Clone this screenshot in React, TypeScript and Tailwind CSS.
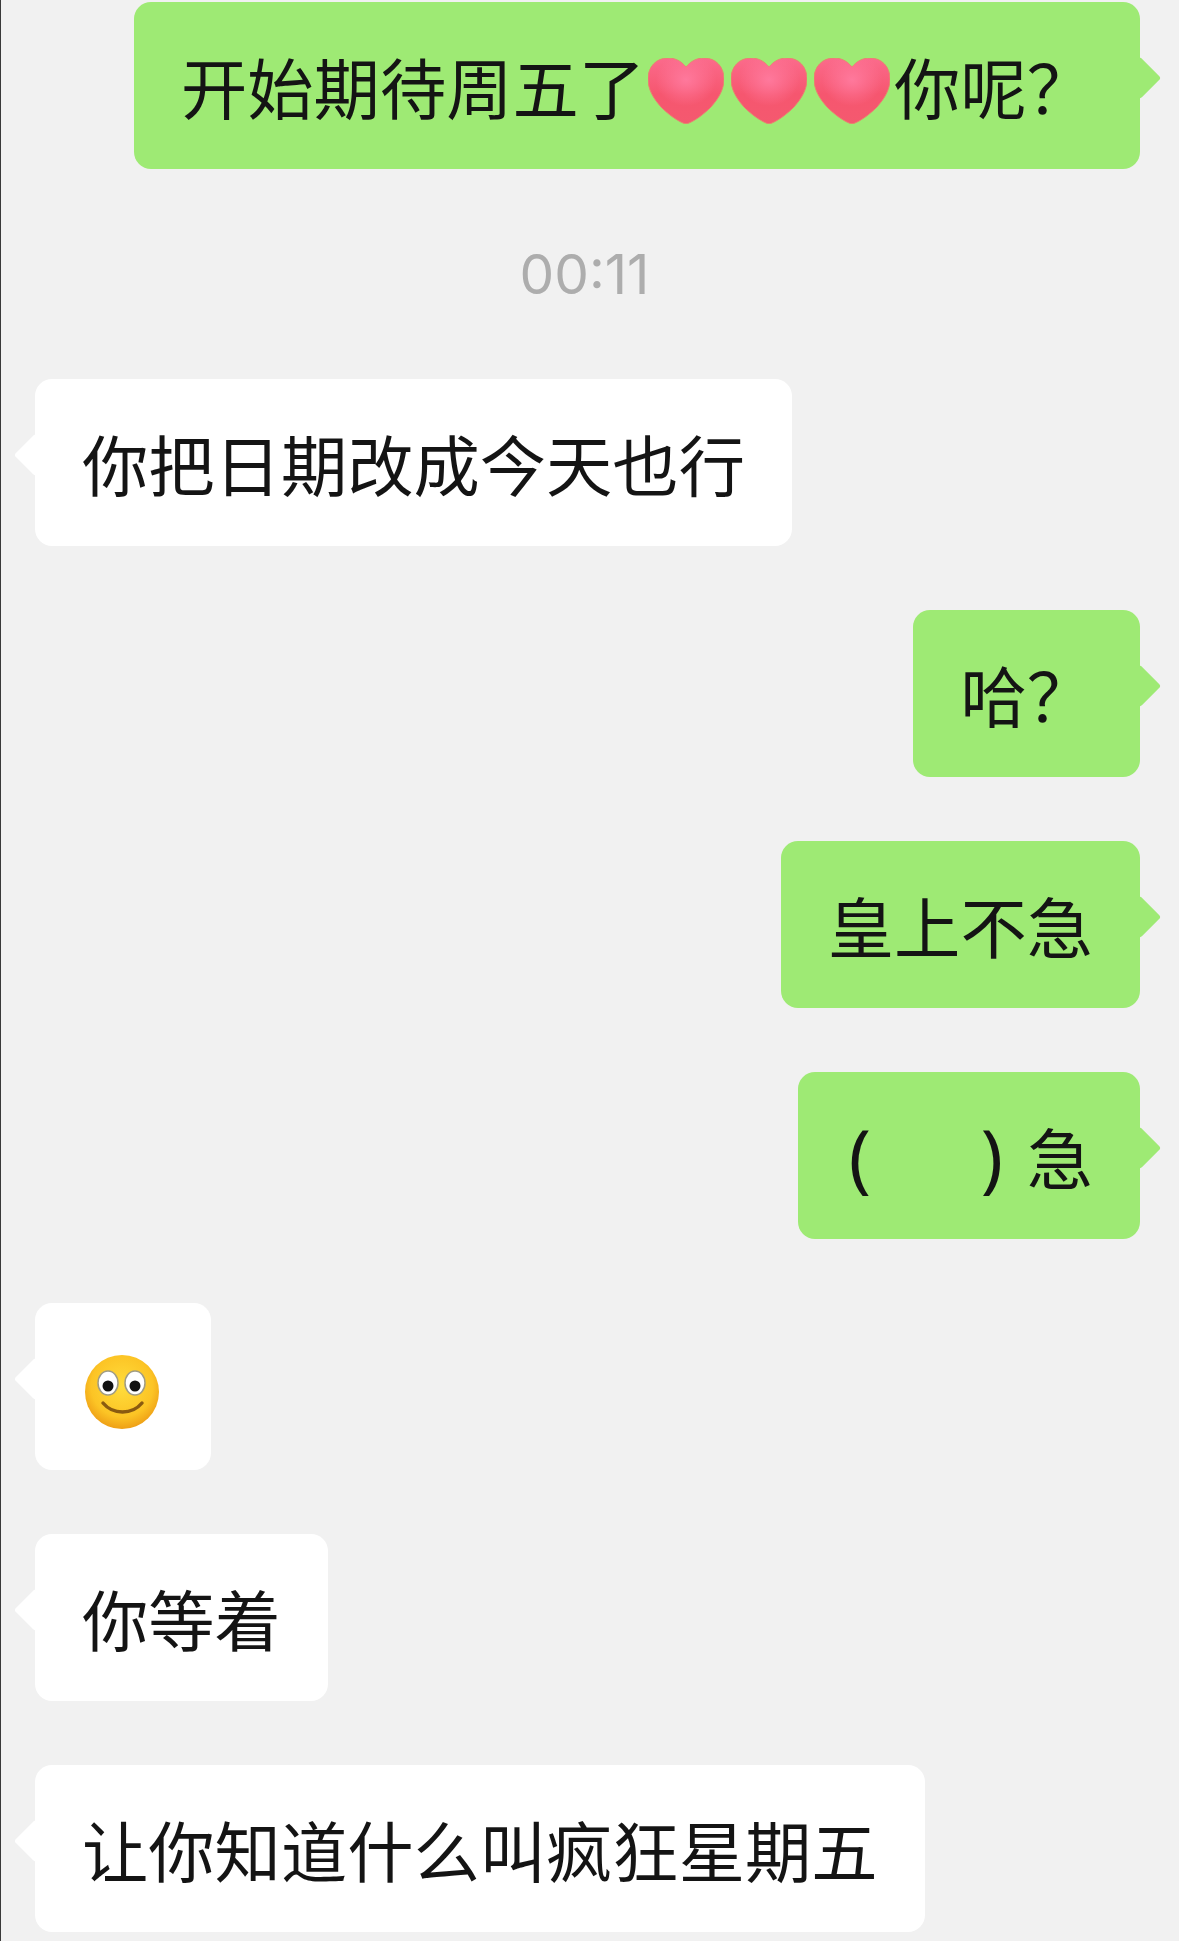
function Heart() {
  return (
    <svg viewBox="0 0 76 66" className="w-[76px] h-[66px] shrink-0 inline-block">
      <defs>
        <linearGradient id="hb" x1="0" y1="0" x2="0" y2="1">
          <stop offset="0" stopColor="#fb6b8c" />
          <stop offset="0.55" stopColor="#f6566f" />
          <stop offset="1" stopColor="#f4596f" />
        </linearGradient>
        <radialGradient id="hh" cx="0.5" cy="0.33" r="0.4">
          <stop offset="0" stopColor="#ff7a9e" stopOpacity="0.95" />
          <stop offset="1" stopColor="#ff7a9e" stopOpacity="0" />
        </radialGradient>
      </defs>
      <path d="M38 9C33 3 27 0 20 0 8 0 0 9 0 21c0 10 5 19 13 28 7 7 15 13 22 16 2 1 4 1 6 0 7-3 15-9 22-16 8-9 13-18 13-28C76 9 68 0 56 0 49 0 43 3 38 9Z" fill="url(#hb)" stroke="#e8836e" strokeWidth="1" />
      <path d="M38 9C33 3 27 0 20 0 8 0 0 9 0 21c0 10 5 19 13 28 7 7 15 13 22 16 2 1 4 1 6 0 7-3 15-9 22-16 8-9 13-18 13-28C76 9 68 0 56 0 49 0 43 3 38 9Z" fill="url(#hh)" />
    </svg>
  );
}

function Smiley() {
  return (
    <svg viewBox="0 0 74 74" className="w-[74px] h-[74px] block">
      <defs>
        <radialGradient id="sf" cx="0.5" cy="0.42" r="0.58">
          <stop offset="0" stopColor="#ffdd3c" />
          <stop offset="0.72" stopColor="#fcc425" />
          <stop offset="1" stopColor="#ee9f16" />
        </radialGradient>
      </defs>
      <circle cx="37" cy="37" r="37" fill="url(#sf)" />
      <ellipse cx="23" cy="28" rx="10" ry="12" fill="#fff" stroke="#a09c84" strokeWidth="1.5" />
      <ellipse cx="50" cy="28" rx="10" ry="12" fill="#fff" stroke="#a09c84" strokeWidth="1.5" />
      <circle cx="23" cy="31" r="5.5" fill="#111" />
      <circle cx="50" cy="31" r="5.5" fill="#111" />
      <path d="M18 48c5 6 12 9 19.500 9s14.500-3 19.500-9" fill="none" stroke="#8a5a10" strokeWidth="3.500" strokeLinecap="round" />
    </svg>
  );
}

function Bubble({ side, children }: { side: "left" | "right"; children: React.ReactNode }) {
  const right = side === "right";
  return (
    <div className={right ? "flex justify-end" : "flex justify-start"}>
      <div
        className={
          right
            ? "relative h-[167px] px-[47px] flex items-center rounded-[17px] bg-[#9eea74]"
            : "relative h-[167px] px-[47px] flex items-center rounded-[17px] bg-white"
        }
      >
        <div
          className={
            right
              ? "absolute top-[61px] -right-[15px] w-[30px] h-[30px] rotate-45 rounded-[3px] bg-[#9eea74]"
              : "absolute top-[61px] -left-[15px] w-[30px] h-[30px] rotate-45 rounded-[3px] bg-white"
          }
        />
        <div className="relative flex items-center whitespace-pre text-[66.3px] leading-none text-[#141414]">{children}</div>
      </div>
    </div>
  );
}

export default function App() {
  return (
    <div
      className="h-[1941px] w-[1179px] overflow-hidden bg-[#f1f1f1] border-l border-[#3a3a3a] pt-[2px] pl-[34px] pr-[39px] flex flex-col gap-[64px]"
      style={{ fontFamily: '"Noto Sans CJK SC", "Noto Sans", sans-serif' }}
    >
      <div className="flex flex-col">
        <Bubble side="right">
          <span>开始期待周五了</span>
          <span className="flex gap-[7px] ml-[3px] mr-[4px] mt-[10px]">
            <Heart />
            <Heart />
            <Heart />
          </span>
          <span>你呢？</span>
        </Bubble>
        <div className="h-[210px] flex items-center justify-center pr-[6px]">
          <span className="text-[55px] leading-none text-[#adadad] font-['Inter',sans-serif]">00:11</span>
        </div>
        <Bubble side="left">你把日期改成今天也行</Bubble>
      </div>
      <Bubble side="right">哈？</Bubble>
      <Bubble side="right">皇上不急</Bubble>
      <Bubble side="right">
        <span className="ml-[4px] w-[22px] text-[74px] font-['Noto_Sans',sans-serif]">(</span>
        <span className="w-[110px]" />
        <span className="w-[22px] text-[74px] font-['Noto_Sans',sans-serif]">)</span>
        <span className="w-[24px]" />
        <span>急</span>
      </Bubble>
      <Bubble side="left">
        <div className="w-[82px] pl-[3px] pt-[11px]">
          <Smiley />
        </div>
      </Bubble>
      <Bubble side="left">你等着</Bubble>
      <Bubble side="left">让你知道什么叫疯狂星期五</Bubble>
    </div>
  );
}
